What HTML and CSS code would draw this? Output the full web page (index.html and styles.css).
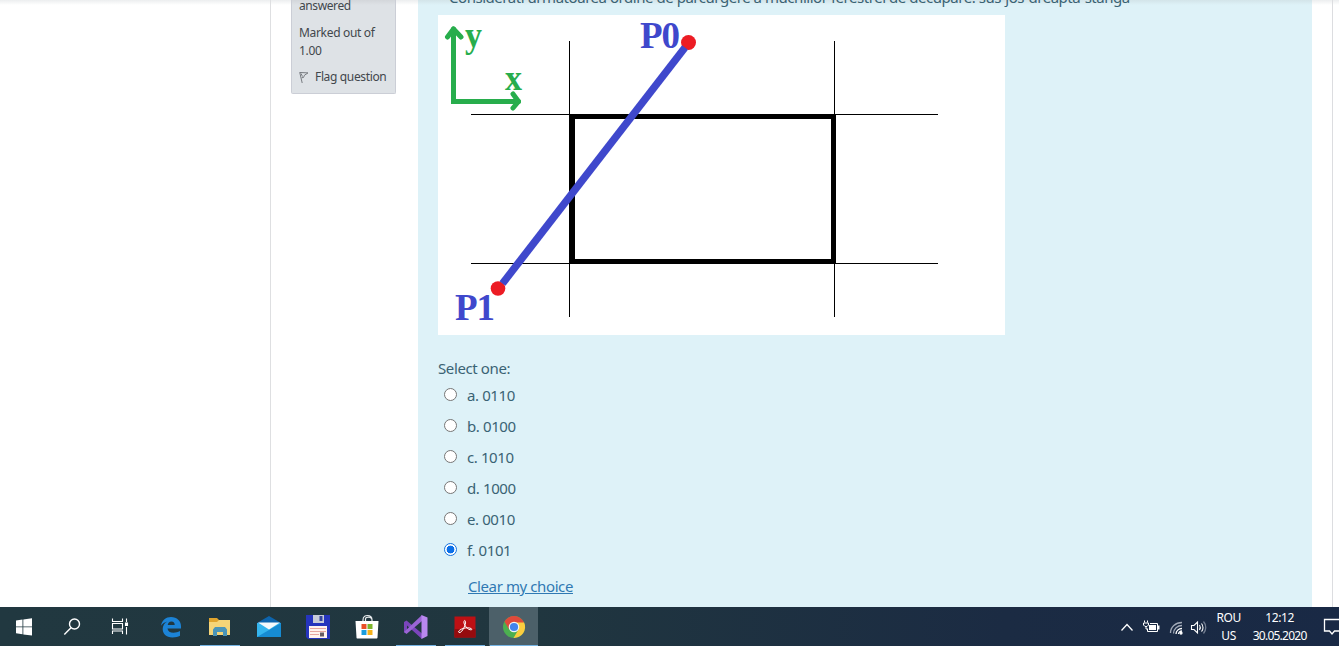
FILE: index.html
```html
<!DOCTYPE html>
<html lang="ro">
<head>
<meta charset="utf-8">
<title>Quiz</title>
<link rel="stylesheet" href="styles.css">
</head>
<body>
<div class="screen">
  <main class="page">
    <div class="drawer"></div>
    <section class="content">
      <aside class="info">
        <p class="state">answered</p>
        <p class="grade">Marked out of<br>1.00</p>
        <p class="flag"><svg width="10" height="13" viewBox="0 0 10 13" fill="none" stroke="#777b80"><path d="M.7 1.2 3.2 12M1 1.500l8 .4-3.500 2.300-1 2.300-1.800.2M2 2.500l1.500 3"/></svg><span>Flag question</span></p>
      </aside>
      <article class="question">
        <p class="prompt"><span>Considerati urmatoarea ordine de parcurgere a muchiilor ferestrei de decupare: sus-jos-dreapta-stanga</span></p>
        <svg class="diagram" width="567" height="320" viewBox="438 15 567 320">
          <path fill="#fff" d="M438 15h567v320H438z"/>
          <path d="M569.500 41v276M834.500 41v276M471 114.500h467M471 263.500h467" stroke="#000" shape-rendering="crispEdges"/>
          <path d="M572.500 116.500h261v145h-261z" fill="none" stroke="#000" stroke-width="5" shape-rendering="crispEdges"/>
          <g fill="none" stroke="#27ad4c" stroke-width="5" stroke-linejoin="round" stroke-linecap="round">
            <path stroke-linejoin="miter" d="M453.500 29v72.500h65"/>
            <path d="m447.500 37 6-8 7.500 8M513 94l5.500 7.500-5.500 6.500"/>
          </g>
          <circle cx="688.500" cy="42.500" r="7.500" fill="#ec1c24"/>
          <circle cx="498" cy="288.500" r="7.300" fill="#ec1c24"/>
          <path d="M685 47.500 502.500 283.500" stroke="#3f48cc" stroke-width="7.500"/>
          <g class="axis">
            <text x="465" y="47" textLength="17" lengthAdjust="spacingAndGlyphs">y</text>
            <text x="505" y="90" textLength="17" lengthAdjust="spacingAndGlyphs">x</text>
          </g>
          <g class="point">
            <text x="640" y="48" textLength="40">P0</text>
            <text x="455" y="320" textLength="40">P1</text>
          </g>
        </svg>
        <p class="select">Select one:</p>
        <div class="answers">
          <label class="answer"><i class="radio"></i><span>a. 0110</span></label>
          <label class="answer"><i class="radio"></i><span>b. 0100</span></label>
          <label class="answer"><i class="radio"></i><span>c. 1010</span></label>
          <label class="answer"><i class="radio"></i><span>d. 1000</span></label>
          <label class="answer"><i class="radio"></i><span>e. 0010</span></label>
          <label class="answer"><i class="radio on"></i><span>f. 0101</span></label>
        </div>
        <a class="clear">Clear my choice</a>
      </article>
    </section>
    <div class="edge"></div>
  </main>
  <footer class="taskbar">
    <div class="apps">
      <div class="app"><svg width="24" height="24" viewBox="0 0 24 24" fill="#fff"><path d="M4 5.500 10.500 4.500V11.500H4zM11.300 4.400 20 3.200v8.300h-8.700zM4 12.300h6.500v7L4 18.300zM11.300 12.300H20v8.200l-8.700-1.100z"/></svg></div>
      <div class="app"><svg width="24" height="24" viewBox="0 0 24 24" fill="none" stroke="#fff" stroke-width="1.400"><circle cx="14.500" cy="9" r="5"/><path d="M11 12.700 4.300 19.500"/></svg></div>
      <div class="app"><svg width="24" height="24" viewBox="0 0 24 24" fill="none" stroke="#fff" stroke-width="1.100"><path d="M4.500 3.500v3h10v-3M4.500 19v-3h10v3M4.500 8.500h10v5.500h-10zM18.500 3.500V7M18.500 12v7.500"/><path fill="#fff" d="M17.500 8h2v2.500h-2z"/></svg></div>
      <div class="app gap"><svg width="24" height="24" viewBox="0 0 24 24"><path fill="#1c83d6" d="M2 10.800C3 5 7 2 12 2c6 0 10 4 10 9v2.500H8.500c.3 2.800 2.600 4.300 6 4.300 2.400 0 4.400-.5 6.500-1.700v4.600c-2 1.200-4.300 1.700-7.500 1.700-6.500 0-9.800-3.500-9.800-8.300 0-3.300 1.700-6 4.800-7.500C5.500 7.300 3.500 8.500 2 10.800zM8.700 10h7c0-2.200-1-3.600-3.300-3.600S9.200 7.700 8.700 10z"/></svg></div>
      <div class="app run"><svg width="24" height="24" viewBox="0 0 24 24"><path fill="#e0a52e" d="M1 3h8l2 2h11v5H1z"/><path fill="#f5d578" d="M1 7h8l2-2h11v15H1z"/><path fill="#4b95b8" d="M5 14.500 7 12h10l2 2.500V21h-4v-4H9v4H5z"/></svg></div>
      <div class="app"><svg width="26" height="24" viewBox="0 0 26 24"><path fill="#0d64ad" d="M1 8 13 1l12 7v5H1z"/><path fill="#35b5ee" d="M1 8h24v14H1z"/><path fill="#168bd2" d="M1 22 25 8v14z"/><path fill="#f4f9fc" d="M2 7.500h22l-11 7z"/></svg></div>
      <div class="app"><svg width="26" height="26" viewBox="0 0 26 26"><path fill="#2635bd" d="M1 1h24v24H3l-2-2z"/><path fill="#c7cbd9" d="M8 1h11v8H8z"/><path fill="#34439c" d="M14.500 2h3v5h-3z"/><path fill="#fff3ef" d="M4 12h18v12H4z"/><path stroke="#e6a7a0" d="M5 14.500h16M5 17.500h16M5 20.500h9"/><path fill="#665a62" d="M15 18.500h4v4h-4z"/></svg></div>
      <div class="app"><svg width="24" height="26" viewBox="0 0 24 26"><path d="M8 9V6c0-4 3-4.500 4.500-4.500S17 2 17 6v3M10.500 8V5c0-2.500 6-2.500 6 0" fill="none" stroke="#e8ecee" stroke-width="1.200"/><path fill="#fff" d="M.5 7h23l-1 16.500c0 .8-.5 1-1 1h-19c-.7 0-1-.3-1-1z"/><path fill="#e94f27" d="M6.500 10h5v5h-5z"/><path fill="#7db52c" d="M12.500 10h5v5h-5z"/><path fill="#1a9ddd" d="M6.500 16h5v5h-5z"/><path fill="#f5b21a" d="M12.500 16h5v5h-5z"/></svg></div>
      <div class="app run"><svg width="26" height="26" viewBox="0 0 26 26"><path fill="#7b45bc" d="m1 8 2.500-1.500L19 19.500V25L4 11.500v7L2 19l-1-1z"/><path fill="#9a65d5" d="M1 18 19 1v6L3.500 20z"/><path fill="#b988ef" d="m18.500 1 6 2.500V22l-6 3z"/></svg></div>
      <div class="app run"><svg width="24" height="24" viewBox="0 0 24 24"><path fill="#bd1014" d="M1.500 1.500h21v21h-21z"/><path fill="#960b0e" d="M1.500 14h21v8.500h-21z"/><path d="M6 17.500c-1.500-1 1-3 4-4s7-1 8.500.3-2 1.500-4-.3S10.300 8.300 11 6.300s2.300 0 1.200 3.200S8.500 18.300 6 17.500z" fill="none" stroke="#fff" stroke-width="1"/></svg></div>
      <div class="app run active"><svg width="24" height="24" viewBox="0 0 24 24"><circle cx="12" cy="12" r="11" fill="#4caf50"/><path fill="#df493b" d="M2.500 6.500a11 11 0 0 1 19 0L22 8H12l-5.200 6z"/><path fill="#fccd3f" d="M12 7.500h10.100A11 11 0 0 1 11.500 23l5-8.500z"/><circle cx="12" cy="12" r="5.300" fill="#f1f5f7"/><circle cx="12" cy="12" r="4.100" fill="#4384ed"/></svg></div>
    </div>
    <div class="tray">
      <svg width="90" height="20" viewBox="1119 617 90 20" fill="none" stroke="#fff" stroke-width="1.300"><path d="m1121.500 630.500 5.500-6 5.500 6"/><path stroke-width="1" d="M1150 623.500h7.500v8H1147.500v-2.500"/><path fill="#fff" stroke="none" d="M1149 625h7v5h-7zM1158 625.500h1.500v4h-1.500z"/><path stroke-width="1" d="M1144.500 620.500v2m3-2v2M1143.500 623h5v2l-1.500 1.500h-2l-1.500-1.500zm2.500 3.500v2.500h2"/><path stroke="#a1a9b7" d="M1170.500 633c0-6 5-10.500 11.500-10.500M1173.500 633.500c0-4.500 4-8 8.500-8"/><path d="M1176 634c0-3 2.500-5.500 6-5.500M1178.500 634c0-1.500 1.500-3 3.500-3"/><circle cx="1181" cy="633" r="1" fill="#fff"/><path stroke-width="1.100" d="M1191.500 625.500h2.500l3.500-3.500v11l-3.500-3.500h-2.500zM1199.500 625c1 1.500 1 3.500 0 5M1201.500 623.500c2 2.500 2 6 0 8"/><path stroke="#737e91" d="M1203.500 621.500c3 3.500 3 8.500 0 12"/></svg>
      <div class="lang"><span>ROU</span><span>US</span></div>
      <div class="clock"><span class="time">12:12</span><span class="date">30.05.2020</span></div>
      <svg class="note" width="16" height="20" viewBox="1324 617 16 20" fill="none" stroke="#fff" stroke-width="1.300"><path d="M1341 619.500h-15.500v11.500h5l2.500 3 2.500-3h6"/></svg>
    </div>
  </footer>
</div>
</body>
</html>
```
FILE: styles.css
```css
* { box-sizing: border-box; }
body { margin: 0; background: #fff; font-family: "Noto Sans", "Open Sans", sans-serif; }
p { margin: 0; }
svg { display: block; flex: none; }
.screen { width: 1339px; height: 646px; display: flex; flex-direction: column; overflow: hidden; }
.page { height: 607px; display: flex; overflow: hidden; background: linear-gradient(#eceeef, #fff 5px); }
.drawer { width: 271px; border-right: 1px solid #dedfe1; flex: none; }
.content { display: flex; align-items: flex-start; width: 1041px; padding-left: 20px; flex: none; }
.edge { width: 21px; border-right: 1px solid #dcdde0; flex: none; }
.info { width: 105px; height: 94px; margin-right: 22px; padding: 0 7px; background: linear-gradient(#d3d6da, #dee2e6 5px); border: 1px solid #cbced6; border-top: 0; border-radius: 0 0 2px 2px; color: #42474c; font-size: 12px; line-height: 18px; white-space: nowrap; flex: none; }
.state { height: 24px; margin-top: -3px; letter-spacing: -.4px; }
.grade { margin-top: 3px; letter-spacing: -.32px; }
.flag { display: flex; align-items: center; gap: 6px; margin-top: 8px; letter-spacing: -.35px; }
.question { display: flow-root; width: 894px; height: 607px; padding-left: 20px; background: linear-gradient(#d3e4e9, #def2f8 5px); color: #3a6374; flex: none; }
.prompt { display: flow-root; height: 15px; padding-left: 11px; white-space: nowrap; font-size: 15px; line-height: 20px; letter-spacing: -.46px; }
.prompt span { display: block; margin-top: -13px; height: 20px; }
.axis { font: bold 35px "Liberation Serif", serif; fill: #27ad4c; }
.point { font: bold 37px "Liberation Serif", serif; fill: #3f48cc; }
.select { margin-top: 23px; font-size: 15px; line-height: 20px; letter-spacing: -.39px; }
.answers { margin-top: 1px; }
.answer { display: flex; align-items: center; height: 31px; padding-left: 6px; gap: 10px; font-size: 15px; letter-spacing: -.4px; }
.radio { width: 13px; height: 13px; margin-top: -1px; border: 1px solid #767676; border-radius: 50%; background: #fff; }
.on { border-color: #1673df; background: radial-gradient(circle, #0c70e8 3.600px, #fff 4.200px); }
.clear { display: block; margin: 11px 0 0 30px; font-size: 15px; line-height: 20px; letter-spacing: -.4px; color: #3079b3; text-decoration: underline; }
.taskbar { height: 39px; display: flex; justify-content: space-between; background: linear-gradient(90deg, #213840 0, #20363f 40%, #1b2b43 75%, #192945); }
.apps { display: flex; }
.app { width: 49px; height: 39px; display: flex; align-items: center; justify-content: center; flex: none; }
.app:nth-child(-n+3) { width: 48px; }
.app.gap { width: 51px; padding-left: 3px; }
.app.run { background: linear-gradient(#76b5e5, #76b5e5) center bottom / 40px 1px no-repeat; }
.app.active { background: linear-gradient(#76b5e5, #76b5e5) center bottom / 48px 1px no-repeat, #4c6069; width: 49px; }
.tray { display: flex; align-items: center; width: 220px; color: #fff; font-size: 12px; line-height: 18px; }
.lang, .clock { display: flex; flex-direction: column; align-items: center; letter-spacing: -.4px; }
.lang { width: 40px; }
.clock { width: 64px; }
.date { letter-spacing: -.75px; }
.note { margin-left: 12px; }
```
